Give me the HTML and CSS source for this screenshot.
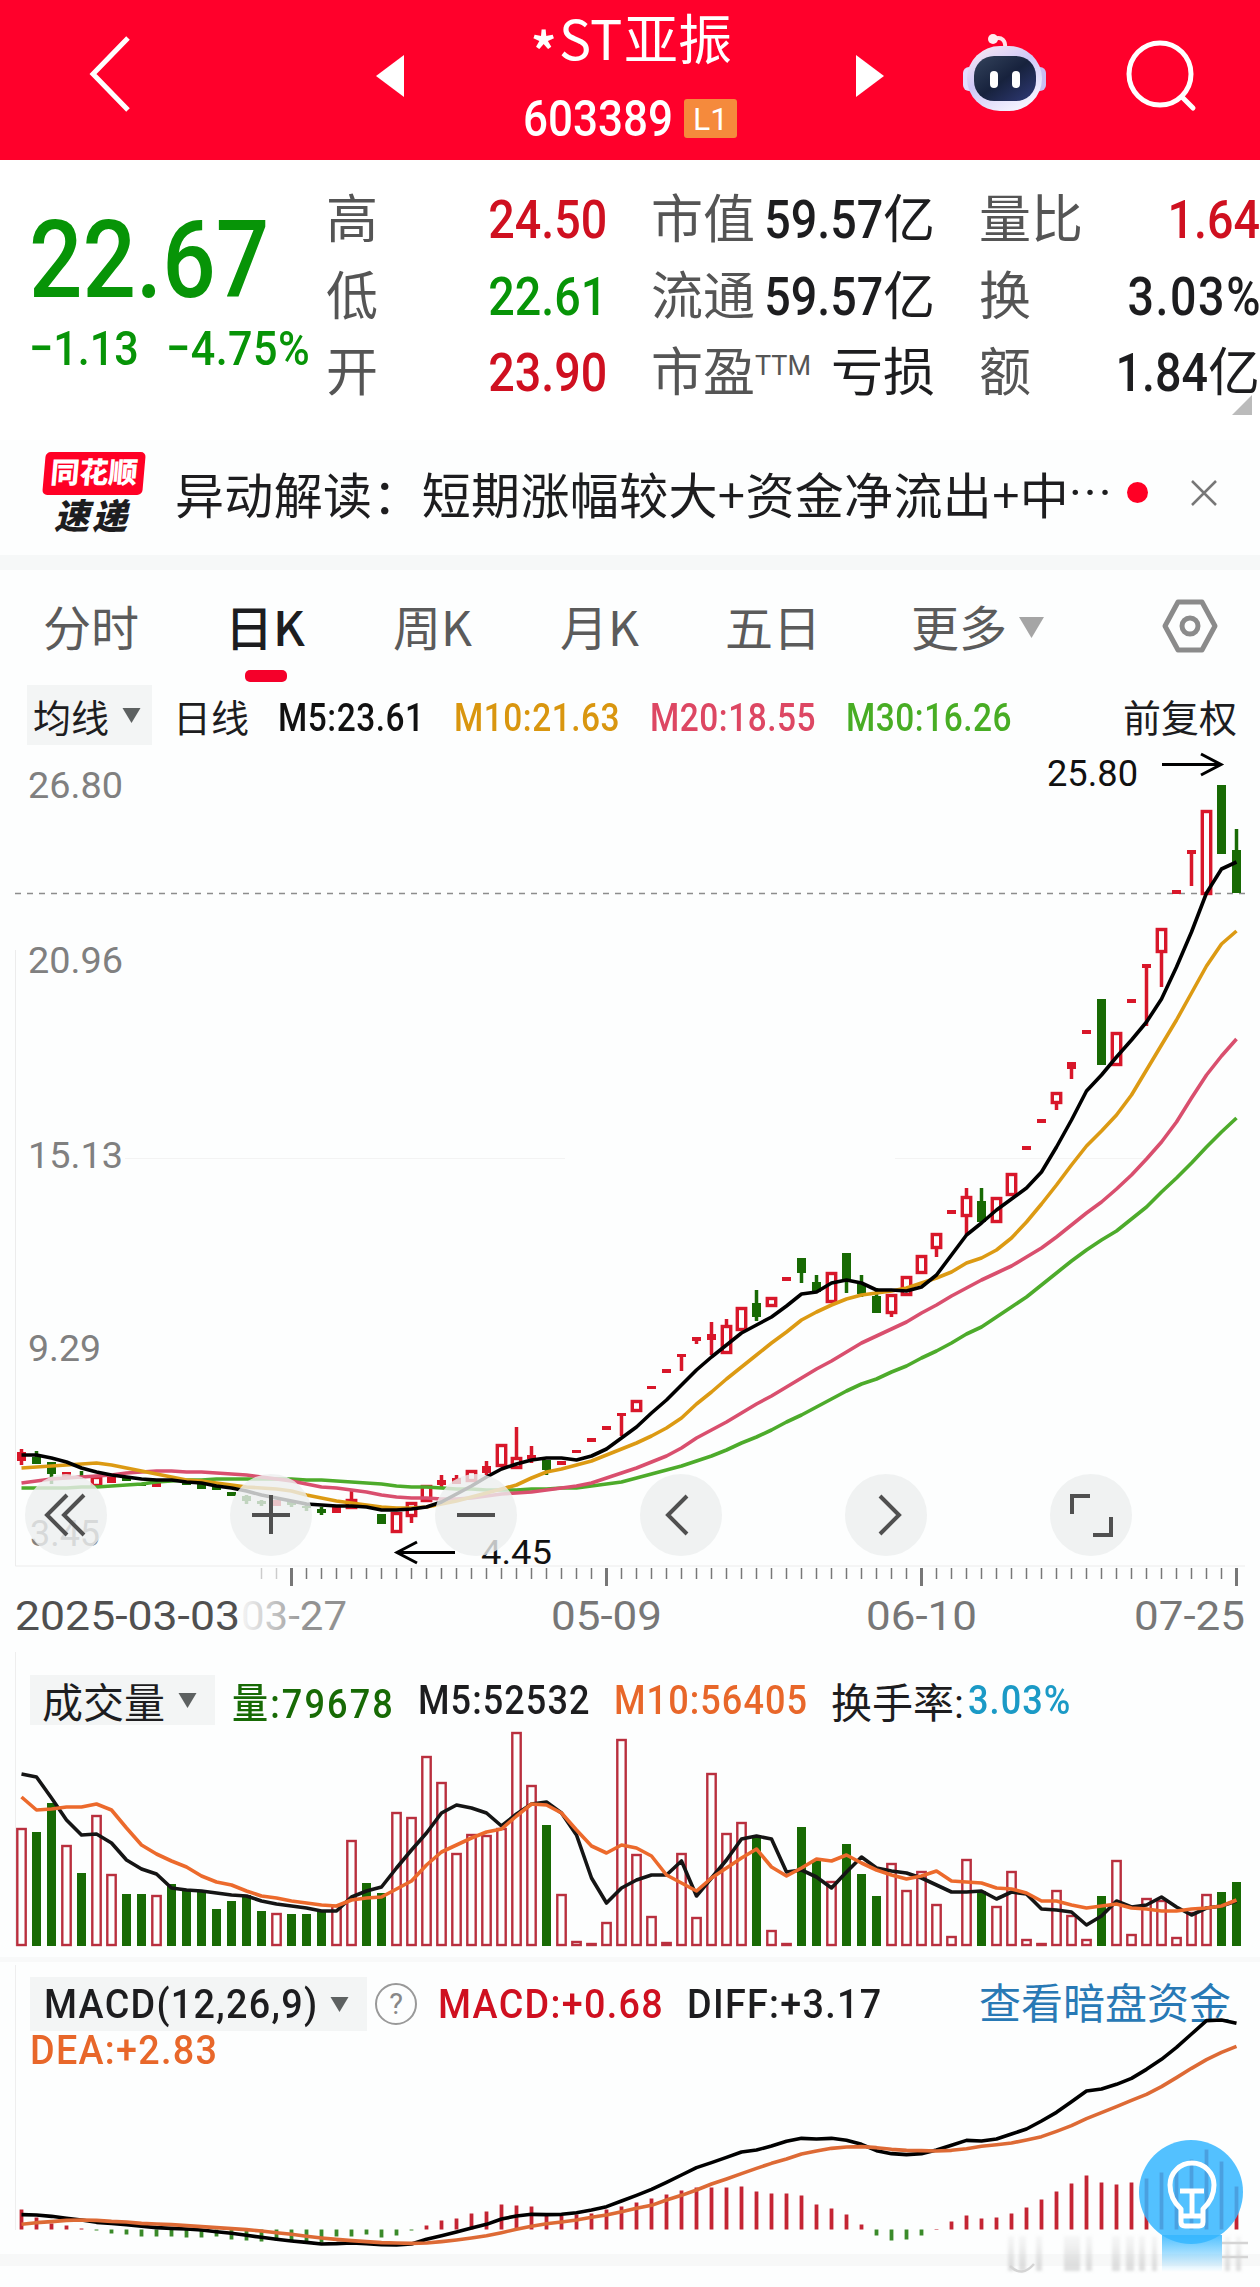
FILE: index.html
```html
<!DOCTYPE html>
<html lang="zh-CN">
<head>
    <meta charset="utf-8">
    <title>*ST亚振 603389</title>
    <link rel="stylesheet" href="styles.css">
</head>
<body>
    <!-- top bar -->
    <header class="topbar">
        <svg class="back" viewBox="0 0 44 80"><path d="M40 4 L5 40 L40 76"/></svg>
        <svg class="arrow" viewBox="0 0 28 42"><path d="M28 0 V42 L0 21Z"/></svg>
        <div class="stock">
            <h1><span class="star">*</span><span class="st">ST</span>亚振</h1>
            <div class="code"><span class="din code-num">603389</span><span class="level">L1</span></div>
        </div>
        <svg class="arrow" viewBox="0 0 28 42"><path d="M0 0 V42 L28 21Z"/></svg>
        <svg class="robot" viewBox="0 0 86 80">
            <defs>
                <linearGradient id="shell" x1="0" y1="0" x2="0.6" y2="1">
                    <stop offset="0" stop-color="#ffeef3"/>
                    <stop offset="0.5" stop-color="#cfc8f6"/>
                    <stop offset="1" stop-color="#f3f2ff"/>
                </linearGradient>
                <linearGradient id="face" x1="0" y1="0" x2="1" y2="1">
                    <stop offset="0" stop-color="#34435c"/>
                    <stop offset="0.5" stop-color="#17223d"/>
                    <stop offset="1" stop-color="#303a78"/>
                </linearGradient>
            </defs>
            <path d="M32 6 C40 3 44 8 43 15" fill="none" stroke="#ffe3e8" stroke-width="4"/>
            <circle cx="31" cy="6" r="5" fill="#ffeef1"/>
            <rect x="1" y="34" width="14" height="24" rx="6" fill="#e3ddff"/>
            <rect x="70" y="34" width="14" height="24" rx="6" fill="#c9bdf2"/>
            <rect x="5" y="13" width="75" height="65" rx="33" fill="url(#shell)"/>
            <rect x="12" y="23" width="62" height="45" rx="20" fill="url(#face)"/>
            <rect x="28" y="38" width="8" height="17" rx="4" fill="#fff"/>
            <rect x="50" y="38" width="8" height="17" rx="4" fill="#fff"/>
        </svg>
        <svg class="search" viewBox="0 0 72 72"><circle cx="34" cy="34" r="31"/><path d="M56 57 L67 68"/></svg>
    </header>

    <!-- price and key figures -->
    <section class="quote">
        <div class="price">
            <div class="din last">22.67</div>
            <div class="change"><span class="din">−1.13</span><span class="din">−4.75%</span></div>
        </div>
        <dl class="stats">
            <dt>高</dt><dd class="up"><span class="din">24.50</span></dd>
            <dt>市值</dt><dd><span class="din">59.57</span>亿</dd>
            <dt>量比</dt><dd class="up"><span class="din">1.64</span></dd>
            <dt>低</dt><dd class="down"><span class="din">22.61</span></dd>
            <dt>流通</dt><dd><span class="din">59.57</span>亿</dd>
            <dt>换</dt><dd><span class="din turnover">3.03%</span></dd>
            <dt>开</dt><dd class="up"><span class="din">23.90</span></dd>
            <dt>市盈<sup>TTM</sup></dt><dd>亏损</dd>
            <dt>额</dt><dd><span class="din">1.84</span>亿</dd>
        </dl>
        <i class="corner"></i>
    </section>

    <!-- news strip -->
    <section class="news">
        <div class="news-logo"><b>同花顺</b><em>速递</em></div>
        <p>异动解读：短期涨幅较大+资金净流出+中<span class="dots">···</span></p>
        <i class="unread"></i>
        <svg class="close" viewBox="0 0 28 28"><path d="M2 2 L26 26 M26 2 L2 26"/></svg>
    </section>

    <nav class="tabs">
        <a>分时</a>
        <a class="active">日K</a>
        <a>周K</a>
        <a>月K</a>
        <a>五日</a>
        <a>更多<svg class="caret" viewBox="0 0 24 20"><path d="M0 0 H24 L12 20Z"/></svg></a>
        <svg class="settings" viewBox="0 0 56 54"><path d="M16 3 H40 L53 27 L40 51 H16 L3 27Z"/><circle cx="28" cy="27" r="8"/></svg>
    </nav>

    <div class="legend ma">
        <span class="picker">均线<svg class="caret" viewBox="0 0 24 20"><path d="M0 0 H24 L12 20Z"/></svg></span>
        <span>日线</span>
        <span class="din black">M5:23.61</span>
        <span class="din gold">M10:21.63</span>
        <span class="din pink">M20:18.55</span>
        <span class="din green">M30:16.26</span>
        <span>前复权</span>
    </div>

    <!-- daily K chart -->
    <section class="kline">
        <svg id="kline" class="plot" viewBox="0 745 1260 905"></svg>
        <div class="controls">
            <button><svg viewBox="0 0 82 82"><path d="M42 21 L22 41 L42 61 M59 21 L39 41 L59 61"/></svg></button>
            <button><svg viewBox="0 0 82 82"><path d="M41 21 V60 M22 41 H60"/></svg></button>
            <button><svg viewBox="0 0 82 82"><path d="M22 41 H60"/></svg></button>
            <button><svg viewBox="0 0 82 82"><path d="M47 22 L28 41 L47 60"/></svg></button>
            <button><svg viewBox="0 0 82 82"><path d="M35 22 L54 41 L35 60"/></svg></button>
            <button><svg viewBox="0 0 82 82"><path d="M22 40 V22 H40 M61 43 V61 H43"/></svg></button>
        </div>
    </section>

    <section class="volume">
        <div class="legend vol">
            <span class="picker">成交量<svg class="caret" viewBox="0 0 24 20"><path d="M0 0 H24 L12 20Z"/></svg></span>
            <span class="din dark-green">量:79678</span>
            <span class="din">M5:52532</span>
            <span class="din orange">M10:56405</span>
            <span>换手率:</span>
            <span class="din blue">3.03%</span>
        </div>
        <svg id="volume" class="plot" viewBox="0 1730 1260 235"></svg>
    </section>

    <section class="macd">
        <div class="legend osc">
            <span class="picker"><span class="din">MACD(12,26,9)</span><svg class="caret" viewBox="0 0 24 20"><path d="M0 0 H24 L12 20Z"/></svg></span>
            <span class="help">?</span>
            <span class="din red">MACD:+0.68</span>
            <span class="din">DIFF:+3.17</span>
            <a class="link">查看暗盘资金</a>
        </div>
        <div class="dea"><span class="din orange">DEA:+2.83</span></div>
        <svg id="macd" class="plot" viewBox="0 2075 1260 212"></svg>
        <button class="tip">
            <svg viewBox="0 0 104 104"><path d="M42 82 V69 Q31 59 31 45 A22 22 0 0 1 75 45 Q75 59 64 69 V82 Q64 86 60 86 H46 Q42 86 42 82Z M42 76 H64 M41 51 H65 M53 51 V76"/></svg>
        </button>
    </section>

    <script src="chart.js"></script>
</body>
</html>
```
FILE: styles.css
```css
* {
    box-sizing: border-box;
}

body {
    margin: 0;
    width: 1260px;
    height: 2287px;
    overflow: hidden;
    background: #fdfefe;
    color: #1d1d1f;
    font-family: Roboto, "Noto Sans CJK SC", sans-serif;
}

button {
    border: 0;
    padding: 0;
}

/* narrow figures */
.din {
    display: inline-block;
    font-weight: 500;
    transform: scaleX(0.88);
    transform-origin: left center;
    white-space: nowrap;
}

.up, .red { color: #cf1020; }
.down { color: #079407; }
.black { color: #111; }
.gold { color: #d9960f; }
.pink { color: #dd4763; }
.green { color: #48ad24; }
.dark-green { color: #176a05; }
.orange { color: #e8672a; }
.blue { color: #1b9ac6; }

/* top bar */
.topbar {
    display: grid;
    grid-template-columns: 288px 147px 333px 105px 165px 72px;
    height: 160px;
    padding-left: 88px;
    background: #ff002b;
    color: #fff;
}

.back {
    width: 44px;
    height: 80px;
    margin-top: 34px;
    fill: none;
    stroke: #fff;
    stroke-width: 5;
}

.arrow {
    width: 28px;
    height: 42px;
    margin-top: 55px;
    fill: #fff;
}

.stock {
    width: 240px;
    padding-top: 4px;
}

h1 {
    display: flex;
    margin: 0;
    height: 66px;
    padding-left: 8px;
    font-family: "Noto Sans CJK SC", sans-serif;
    font-size: 54px;
    line-height: 66px;
    font-weight: 400;
    white-space: nowrap;
}

.star {
    width: 28px;
    font-size: 50px;
    font-weight: 700;
    line-height: 88px;
}

.st {
    width: 65px;
}

.code {
    display: flex;
    align-items: flex-start;
    padding-top: 29px;
}

.code-num {
    width: 161px;
    font-size: 50px;
    line-height: 41px;
}

.level {
    width: 53px;
    height: 39px;
    border-radius: 3px;
    background: #f58a3c;
    font-size: 32px;
    line-height: 40px;
    text-align: center;
}

.robot {
    width: 86px;
    height: 80px;
    margin: 33px 0 0 1px;
}

.search {
    width: 72px;
    height: 72px;
    margin-top: 40px;
    fill: none;
    stroke: #fff;
    stroke-width: 5;
    stroke-linecap: round;
}

/* figures */
.quote {
    position: relative;
    display: flex;
    height: 280px;
    background: #fff;
}

.price {
    width: 326px;
    padding: 40px 0 0 29px;
    color: #079407;
}

.last {
    height: 116px;
    font-size: 107px;
    line-height: 121px;
}

.change {
    display: grid;
    grid-template-columns: 137px 163px;
    font-size: 49px;
    line-height: 66px;
}

.change .din:last-child {
    letter-spacing: 0.5px;
}

.stats {
    display: grid;
    grid-template-columns: 151px 174px 110px 218px 109px 172px;
    grid-template-rows: repeat(3, 76.5px);
    width: 934px;
    margin: 22px 0 0;
    font-size: 52px;
    line-height: 77px;
    white-space: nowrap;
}

.stats dt {
    color: #555;
}

.stats dd {
    display: flex;
    justify-content: flex-end;
    margin: 0;
    padding-right: 44px;
}

.stats dd:nth-of-type(3n) {
    padding-right: 0;
}

.stats .din {
    transform-origin: right center;
    font-size: 53px;
}

.stats .turnover {
    letter-spacing: 1.8px;
    margin-right: -2px;
}

.stats sup {
    font-size: 27px;
    line-height: 0;
    vertical-align: 16px;
}

.corner {
    position: absolute;
    right: 8px;
    bottom: 25px;
    border: 10px solid transparent;
    border-right-color: #bbb;
    border-bottom-color: #bbb;
}

/* news */
.news {
    display: flex;
    align-items: center;
    height: 130px;
    padding: 0 0 10px 44px;
    border-bottom: 15px solid #f6f8f8;
}

.news-logo {
    width: 131px;
    padding-top: 3px;
    font-weight: 900;
    line-height: 36px;
}

.news-logo b {
    display: block;
    width: 100px;
    height: 43px;
    margin-bottom: 5px;
    border-radius: 5px;
    transform: skewX(-5deg);
    background: #ff0025;
    color: #fff;
    font-size: 29px;
    line-height: 43px;
    font-weight: 900;
    text-align: center;
}

.news-logo em {
    display: block;
    padding-left: 10px;
    font-size: 35px;
    letter-spacing: 3px;
}

.news p {
    display: flex;
    width: 952px;
    margin: 0;
    font-size: 49px;
    font-family: "Noto Sans CJK SC", sans-serif;
    letter-spacing: 0.35px;
    white-space: nowrap;
}

.dots {
    padding-top: 8px;
    font-family: Roboto, sans-serif;
    letter-spacing: 2px;
}

.unread {
    width: 21px;
    height: 21px;
    border-radius: 50%;
    background: #ff0025;
}

.close {
    width: 28px;
    height: 28px;
    margin-left: 42px;
    stroke: #777;
    stroke-width: 2.5;
}

/* tabs */
.tabs {
    display: grid;
    grid-template-columns: 182px 168px 167px 165px 186px 251px 56px;
    height: 115px;
    padding: 21px 0 0 43px;
    color: #5b5b5b;
    font-family: "Noto Sans CJK SC", sans-serif;
    font-size: 48px;
    line-height: 68px;
    white-space: nowrap;
}

.tabs .active {
    color: #1d1d1f;
    font-weight: 500;
}

.active::after {
    content: "";
    display: block;
    width: 42px;
    height: 12px;
    margin: 11px 0 0 20px;
    border-radius: 5px;
    background: #f5002a;
}

.caret {
    width: 21px;
    height: 15px;
    margin-left: 12px;
    fill: #5d6161;
}

.tabs .caret {
    width: 25px;
    height: 21px;
    fill: #a5a5a5;
    vertical-align: 8px;
}

.settings {
    width: 56px;
    height: 54px;
    margin-top: 8px;
    fill: none;
    stroke: #8b8b8b;
    stroke-width: 5;
    stroke-linejoin: round;
}

/* legends */
.legend {
    display: grid;
    align-items: center;
    white-space: nowrap;
}

.picker {
    display: flex;
    align-items: center;
    background: #f3f5f5;
}

.ma {
    grid-template-columns: 146px 105px 176px 196px 196px 277px 120px;
    height: 60px;
    padding-left: 27px;
    font-size: 38px;
}

.ma .din {
    padding-top: 5px;
    letter-spacing: 0.6px;
}

.ma .picker {
    width: 125px;
    height: 60px;
    padding-left: 6px;
}

.vol {
    grid-template-columns: 202px 186px 196px 217px 137px 120px;
    height: 80px;
    padding: 20px 0 2px 30px;
    font-size: 41px;
}

.vol .din {
    letter-spacing: 1.2px;
}

.vol .dark-green {
    letter-spacing: 2.4px;
}

.vol .picker {
    width: 185px;
    height: 50px;
    padding-left: 12px;
}

.osc {
    grid-template-columns: 345px 63px 249px 292px 260px;
    height: 60px;
    padding: 5px 0 1px 30px;
    font-size: 41px;
}

.osc .din, .dea .din {
    letter-spacing: 1.4px;
    transform: scaleX(0.92);
}

.osc .picker {
    width: 337px;
    height: 54px;
    padding-left: 14px;
}

.osc .picker .din {
    width: 273px;
}

.help {
    width: 42px;
    height: 42px;
    border: 2px solid #999;
    border-radius: 50%;
    color: #888;
    font-size: 29px;
    line-height: 38px;
    text-align: center;
}

.link {
    color: #2879b5;
    font-size: 42px;
    padding-bottom: 7px;
}

.dea {
    height: 50px;
    padding-left: 30px;
    font-size: 41px;
    line-height: 50px;
}

/* plots */
.plot {
    display: block;
    width: 1260px;
    overflow: visible;
    fill: none;
    font-family: Roboto, sans-serif;
}

.kline, .macd {
    position: relative;
}

.volume {
    height: 315px;
}

.controls {
    position: absolute;
    left: 25px;
    top: 729px;
    display: flex;
    gap: 123px;
}

.controls button {
    width: 82px;
    height: 82px;
    border-radius: 50%;
    background: rgba(236, 239, 239, 0.8);
}

.controls svg {
    display: block;
    fill: none;
    stroke: #505050;
    stroke-width: 4;
}

.tip {
    position: absolute;
    left: 1139px;
    top: 175px;
    width: 104px;
    height: 104px;
    border-radius: 50%;
    background: rgba(53, 182, 255, 0.85);
}

.tip svg {
    display: block;
    fill: none;
    stroke: #fff;
    stroke-width: 5;
    stroke-linejoin: round;
}
```
FILE: chart.js
```js
var STEP = 15;
var LEFT = 21.5;
var RED = '#d8172a';
var GREEN = '#186a04';

function xAt(i) {
    return LEFT + i * STEP;
}

function add(parent, tag, attrs, text) {
    var el = document.createElementNS('http://www.w3.org/2000/svg', tag);
    for (var key in attrs) {
        el.setAttribute(key, attrs[key]);
    }
    if (text) {
        el.textContent = text;
    }
    parent.appendChild(el);
    return el;
}

function line(svg, values, color, toY) {
    var points = values.map(function (v, i) {
        return xAt(i) + ',' + (toY ? toY(v) : v);
    });
    add(svg, 'polyline', { points: points.join(' '), stroke: color, 'stroke-width': 3.6, 'stroke-linejoin': 'round' });
}

function label(svg, x, y, text, size, width, color) {
    add(svg, 'text', { x: x, y: y, 'font-size': size, textLength: width, lengthAdjust: 'spacingAndGlyphs', fill: color }, text);
}

// ---------- K line ----------
// [colour, body top, body bottom, high, low]
var candles = [
    ['r',1452,1461,1449,1465],['g',1457,1464,1451,1464],['g',1462,1474,1462,1484],['r',1472,1479],['g',1476,1478,1471,1479],
    ['r',1476,1487],['r',1477,1483],['g',1478,1481],['g',1483,1486],['r',1483,1487],
    ['g',1479,1481],['g',1482,1485],['g',1483,1489],['g',1487,1490],['g',1492,1496],
    ['g',1496,1501,1495,1504],['g',1501,1504,1500,1506],['r',1500,1506],['g',1502,1505,1501,1507],['g',1506,1508,1504,1511],
    ['g',1509,1513,1507,1515],['r',1507,1513],['r',1499,1509,1490,1509],['g',1506,1508],['g',1514,1524],
    ['r',1512,1533],['r',1502,1517,1502,1523],['r',1485,1502],['r',1480,1485,1475,1488],['r',1478,1484,1475,1484],
    ['r',1470,1482],['r',1466,1473,1461,1475],['r',1444,1467],['r',1457,1469,1427,1469],['r',1455,1459,1446,1463],
    ['g',1460,1470,1460,1475],['r',1461,1465],['r',1450,1453],['r',1438,1442],['r',1426,1430],
    ['r',1413,1416,1413,1436],['r',1400,1412],['r',1386,1389],['r',1369,1373],['r',1354,1357,1354,1371],
    ['r',1337,1341,1337,1344],['r',1334,1340,1322,1355],['r',1325,1354,1319,1354],['r',1307,1331],['g',1303,1317,1290,1321],
    ['r',1297,1307],['r',1277,1281],['g',1258,1273,1258,1283],['g',1282,1292,1275,1292],['r',1272,1303],
    ['g',1253,1280,1253,1293],['g',1283,1294,1275,1297],['g',1296,1313,1288,1313],['r',1294,1314,1294,1317],['r',1276,1296],
    ['r',1255,1274],['r',1233,1249,1233,1257],['r',1210,1214],['r',1196,1217,1188,1235],['g',1201,1222,1188,1222],
    ['r',1197,1223],['r',1173,1196],['r',1146,1150],['r',1119,1123],['r',1092,1104,1092,1110],
    ['r',1062,1069,1062,1079],['r',1030,1034],['g',999,1065],['r',1032,1066],['r',999,1003],
    ['r',964,968,964,1026],['r',928,953,928,987],['r',890,894],['r',850,854,850,886],['r',810,895],
    ['g',785,854],['g',850,893,829,893]
];
var ma5 = [1455,1455,1458,1462,1468,1472,1475,1477,1479,1480,1480,1482,1483,1486,1488,1491,1495,1498,1501,1504,1505,1506,1506,1507,1510,1510,1509,1507,1502,1494,1486,1477,1469,1464,1460,1458,1458,1460,1456,1449,1438,1427,1413,1400,1385,1370,1357,1345,1333,1325,1317,1306,1294,1292,1283,1280,1283,1290,1290,1291,1287,1275,1255,1235,1223,1210,1199,1188,1172,1147,1120,1091,1075,1057,1040,1022,999,967,932,893,869,862];
var ma10 = [1468,1467,1466,1465,1464,1463,1465,1468,1471,1474,1477,1480,1481,1483,1485,1487,1488,1489,1491,1495,1498,1501,1503,1505,1507,1508,1508,1507,1504,1501,1497,1493,1489,1485,1478,1472,1469,1465,1461,1455,1449,1443,1436,1428,1418,1404,1392,1379,1367,1355,1343,1332,1320,1312,1305,1299,1295,1293,1291,1288,1283,1278,1272,1263,1258,1250,1238,1222,1204,1185,1165,1146,1131,1115,1095,1070,1045,1020,993,966,944,931];
var ma20 = [1483,1481,1479,1478,1477,1476,1475,1473,1472,1471,1471,1472,1472,1473,1474,1475,1477,1479,1481,1484,1487,1488,1490,1492,1495,1497,1498,1498,1499,1499,1498,1496,1494,1493,1492,1490,1488,1486,1483,1478,1473,1468,1462,1456,1448,1438,1430,1422,1413,1404,1396,1387,1378,1369,1361,1352,1343,1336,1329,1322,1313,1305,1296,1288,1280,1273,1266,1257,1248,1237,1225,1213,1202,1189,1175,1159,1142,1122,1098,1075,1056,1039];
var ma30 = [1488,1488,1488,1488,1487,1487,1486,1485,1484,1482,1481,1480,1480,1479,1479,1479,1479,1479,1479,1480,1480,1481,1482,1483,1484,1486,1487,1487,1488,1489,1489,1490,1490,1490,1489,1489,1488,1488,1486,1484,1482,1478,1474,1470,1466,1461,1456,1450,1443,1437,1430,1422,1415,1407,1399,1391,1384,1379,1372,1366,1358,1351,1343,1334,1327,1317,1307,1297,1285,1273,1261,1250,1240,1231,1219,1207,1192,1178,1163,1147,1132,1118];

var k = document.getElementById('kline');
add(k, 'path', { d: 'M15.5 950 V1566 H1245', stroke: '#ececec' });
add(k, 'path', { d: 'M15 893.5 H1245', stroke: '#8d8d8d', 'stroke-width': 1.5, 'stroke-dasharray': '6 6' });
add(k, 'path', { d: 'M125 1158.5 H565 M895 1158.5 H1150', stroke: '#f3f3f3' });

label(k, 28, 798, '26.80', 37, 95, '#808080');
label(k, 28, 973, '20.96', 37, 95, '#808080');
label(k, 28, 1168, '15.13', 37, 95, '#808080');
label(k, 28, 1361, '9.29', 37, 73, '#808080');
label(k, 30, 1546, '3.45', 37, 70, '#808080');

candles.forEach(function (c, i) {
    var color = c[0] === 'r' ? RED : GREEN;
    var x = xAt(i);
    var tall = c[2] - c[1];
    if (c[3]) {
        add(k, 'path', { d: 'M' + x + ' ' + c[3] + 'V' + c[1] + 'M' + x + ' ' + c[2] + 'V' + c[4], stroke: color, 'stroke-width': 3.5 });
    }
    if (c[0] === 'r' && tall > 9) {
        add(k, 'rect', { x: x - 4.2, y: c[1] + 1.5, width: 8.4, height: tall - 3, stroke: color, 'stroke-width': 3.4 });
    } else {
        add(k, 'rect', { x: x - 4.5, y: c[1], width: 9, height: tall, fill: color });
    }
});

line(k, ma30, '#4dab2b');
line(k, ma20, '#d94f6e');
line(k, ma10, '#dc9a13');
line(k, ma5, '#000');

label(k, 1047, 786, '25.80', 36, 91, '#111');
add(k, 'path', { d: 'M1162 764.5 H1220 M1201 754 L1221 764.5 L1201 775', stroke: '#000', 'stroke-width': 3 });
label(k, 481, 1564, '4.45', 34, 71, '#111');
add(k, 'path', { d: 'M455 1552.5 H398 M417 1542 L397 1552.5 L417 1563', stroke: '#000', 'stroke-width': 3 });

// date axis
for (var i = 16; i < 82; i++) {
    var major = (i - 18) % 21 === 0;
    add(k, 'path', {
        d: 'M' + xAt(i) + ' 1568 V' + (major ? 1586 : 1579),
        stroke: i < 18 ? '#ccc' : '#777',
        'stroke-width': major ? 3 : 1.5
    });
}
var fade = add(k, 'linearGradient', { id: 'fade', x1: 245, x2: 347, y1: 0, y2: 0, gradientUnits: 'userSpaceOnUse' });
add(fade, 'stop', { offset: 0, 'stop-color': '#f0f0f0' });
add(fade, 'stop', { offset: 0.6, 'stop-color': '#929292' });
label(k, 241, 1630, '03-27', 41, 106, 'url(#fade)');
label(k, 15, 1630, '2025-03-03', 41, 225, '#505050');
label(k, 551, 1630, '05-09', 41, 111, '#777');
label(k, 866, 1630, '06-10', 41, 111, '#777');
label(k, 1134, 1630, '07-25', 41, 111, '#777');

// ---------- volume ----------
var colors = 'rggrgrrggrgggggggrgggrrggrrrrrrrrrrgrrrrrrrrrrrrrgrrggrgggrrrrrrgrrrrrrrgrrrrrrrgg';
var volumes = [118,114,143,101,73,131,72,52,52,51,62,56,55,37,45,51,35,33,32,32,34,41,106,63,53,134,129,190,164,93,112,111,118,214,161,121,52,5,3,24,207,92,30,4,93,29,173,113,124,111,16,3,119,86,65,102,72,50,83,56,75,42,10,87,55,40,75,7,3,56,31,7,50,86,12,48,46,9,34,52,54,64];
var vol5 = [172,169,148,126,111,112,103,86,77,72,58,56,55,53,51,50,45,42,40,38,35,35,49,55,59,78,96,113,133,141,138,133,120,132,142,144,133,111,68,43,58,66,71,71,85,50,68,86,107,110,107,74,76,69,58,74,89,78,75,73,68,61,54,54,55,47,54,52,37,36,34,21,30,45,39,41,49,39,31,38,40,45];
var vol10 = [149,136,137,139,139,142,136,118,101,92,85,79,70,64,61,55,50,48,45,43,41,40,46,48,49,57,65,81,94,101,108,114,117,130,142,141,133,116,100,93,101,98,90,71,63,55,68,78,88,97,79,70,78,87,85,91,83,76,71,67,70,75,65,64,63,58,57,53,45,45,41,38,40,42,38,37,35,35,37,38,40,46];
var BASE = 1946;

var v = document.getElementById('volume');
function volY(n) {
    return BASE - n;
}
add(v, 'path', { d: 'M15.5 1652 V1946', stroke: '#eee' });
volumes.forEach(function (n, i) {
    if (colors[i] === 'g') {
        add(v, 'rect', { x: xAt(i) - 4.5, y: BASE - n, width: 9, height: n, fill: GREEN });
    } else {
        add(v, 'rect', { x: xAt(i) - 4.2, y: BASE - n + 1, width: 8.4, height: Math.max(n - 2, 1), stroke: '#b92f3e', 'stroke-width': 2.4 });
    }
});
line(v, vol5, '#151515', volY);
line(v, vol10, '#ec6a2c', volY);
add(v, 'rect', { x: 0, y: 1957, width: 1260, height: 5, fill: '#f8f9f9' });

// ---------- MACD ----------
var bars = [20,12,6,4,1,-1,-4,-5,-7,-7,-7,-8,-8,-7,-10,-11,-12,-11,-11,-12,-13,-7,-7,-5,-8,-6,-1,4,9,11,16,18,25,24,23,15,14,15,16,20,23,27,31,35,39,42,42,42,43,38,36,36,34,25,21,15,5,-6,-11,-10,-6,0.5,8,14,11,12,16,22,30,38,46,54,47,45,47,51,57,62,70,80,68,43];
var diff = [764,765,769,775,780,787,790,794,799,803,805,807,810,815,820,826,832,838,843,847,852,851,849,851,854,855,852,838,827,816,804,793,777,768,763,764,763,758,750,740,723,706,688,667,645,623,608,592,576,570,558,544,535,537,535,541,553,572,581,584,581,570,556,541,543,537,522,507,483,457,425,393,387,373,355,328,298,262,222,182,180,190];
var dea = [793,788,785,781,780,781,784,786,790,792,794,797,800,803,806,809,813,818,823,829,834,838,842,845,848,849,850,849,845,840,834,827,818,808,799,791,786,780,772,765,755,745,736,720,706,690,672,657,641,625,610,597,582,573,565,561,560,563,568,571,572,573,571,566,559,554,549,540,530,514,497,476,458,440,421,403,380,353,325,299,277,259];

var m = document.getElementById('macd');
function macdY(n) {
    return 1960 + n / 3;
}
add(m, 'path', { d: 'M15.5 1965 V2230', stroke: '#eee' });
bars.forEach(function (n, i) {
    add(m, 'path', { d: 'M' + xAt(i) + ' 2229.5 v' + -n, stroke: n > 0 ? '#c42433' : '#3a8a2a', 'stroke-width': 3.8 });
});
line(m, diff, '#000', macdY);
line(m, dea, '#dd6a35', macdY);
add(m, 'rect', { x: 0, y: 2254, width: 1260, height: 12, fill: '#f7f8f8' });

// soft streaks under the tip button
var grey = add(m, 'linearGradient', { id: 'grey', x1: 0, x2: 0, y1: 0, y2: 1 });
add(grey, 'stop', { offset: 0, 'stop-color': '#bbb', 'stop-opacity': 0.1 });
add(grey, 'stop', { offset: 1, 'stop-color': '#bbb', 'stop-opacity': 0.5 });
var blur = add(m, 'filter', { id: 'soft', x: -0.5, width: 2 });
add(blur, 'feGaussianBlur', { stdDeviation: 1.5 });
[[1008, 6], [1019, 7], [1036, 6], [1064, 16], [1086, 6], [1112, 8], [1126, 8], [1139, 6], [1152, 5], [1225, 5], [1236, 5]].forEach(function (s) {
    add(m, 'rect', { x: s[0], y: 2236, width: s[1], height: 35, fill: 'url(#grey)', filter: 'url(#soft)' });
});
add(m, 'path', { d: 'M1010 2266 Q1022 2278 1034 2264 M1222 2243 H1248 M1222 2257 H1248', stroke: '#d4d4d4', 'stroke-width': 2.5 });
var glow = add(m, 'linearGradient', { id: 'glow', x1: 0, x2: 0, y1: 0, y2: 1 });
add(glow, 'stop', { offset: 0, 'stop-color': '#4fc0ff' });
add(glow, 'stop', { offset: 1, 'stop-color': '#4fc0ff', 'stop-opacity': 0 });
add(m, 'rect', { x: 1162, y: 2235, width: 60, height: 37, fill: 'url(#glow)' });
```
